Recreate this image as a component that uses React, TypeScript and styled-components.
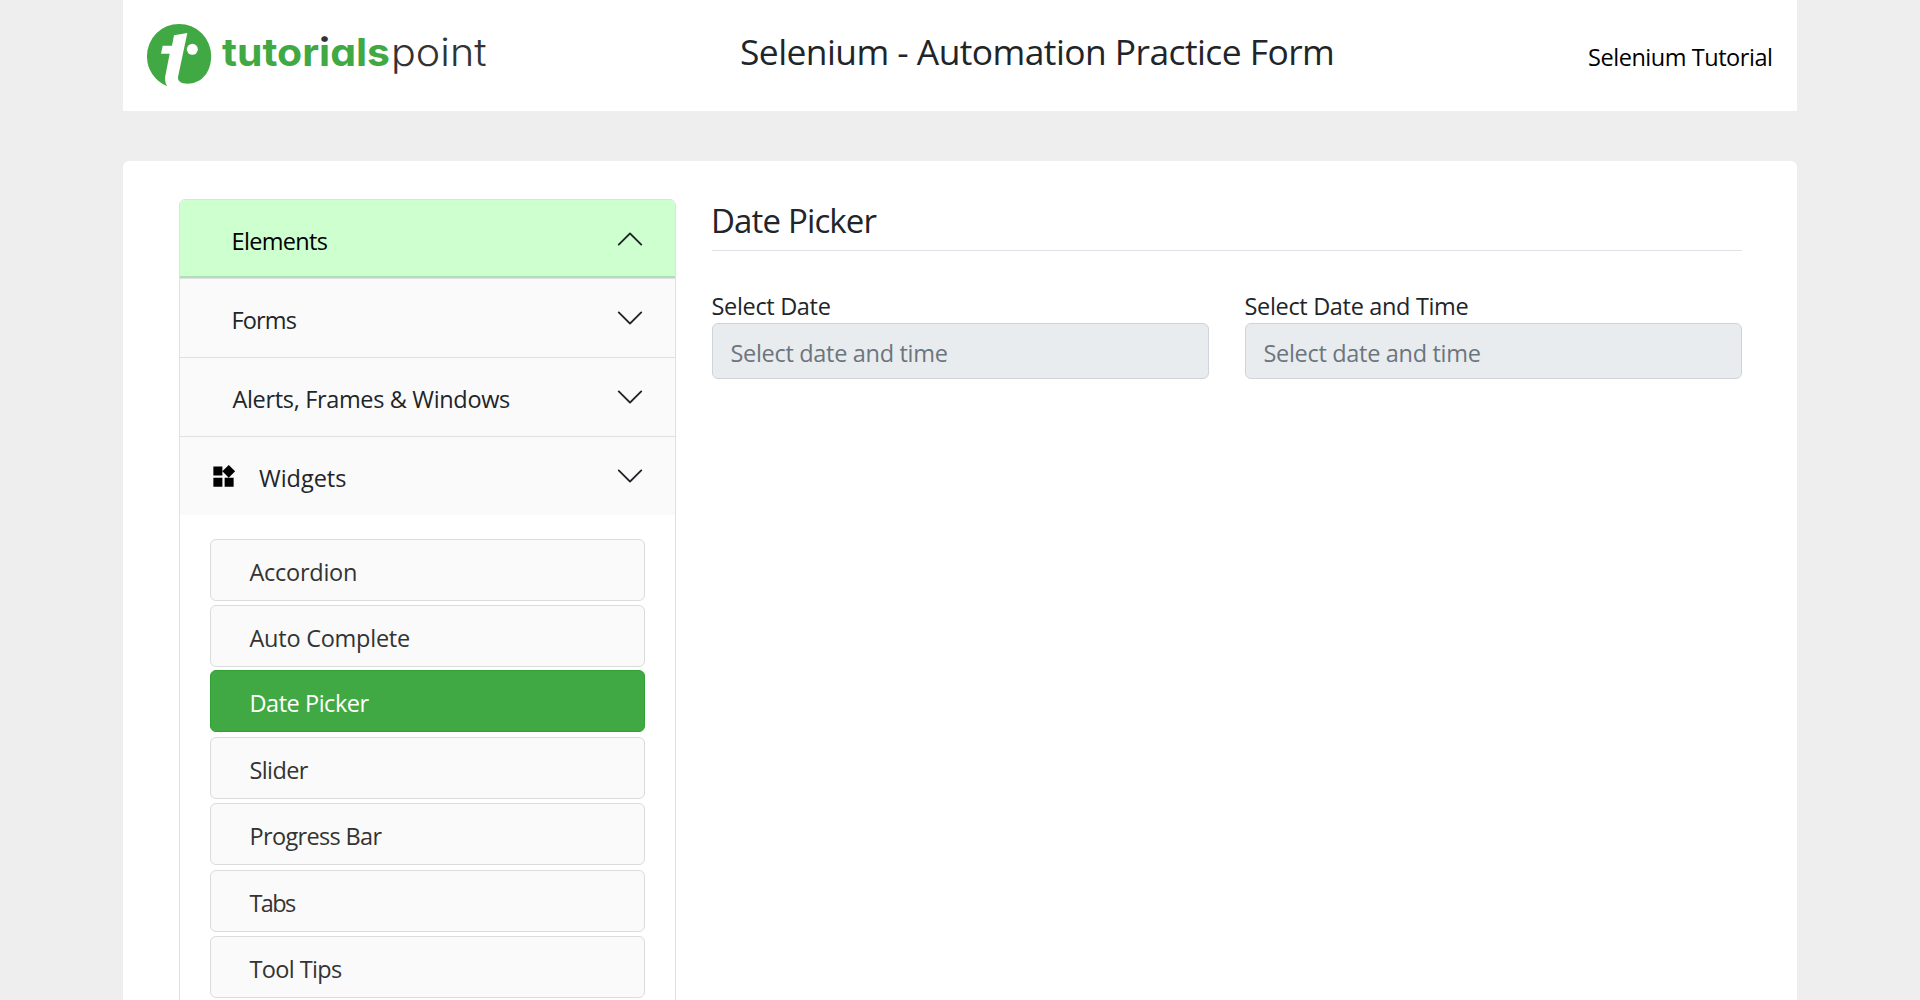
import React, { useState } from "react";
import styled, { createGlobalStyle } from "styled-components";

const GlobalStyle = createGlobalStyle`
  *, *::before, *::after { box-sizing: border-box; }
  html, body { margin: 0; padding: 0; }
  body {
    background: #eee;
    color: #212529;
    font-family: "Open Sans", "Noto Sans", sans-serif;
    font-size: 23.5px;
    line-height: 36px;
    height: 1000px;
    overflow: hidden;
  }
`;

const Page = styled.div`
  width: 1674px;
  margin: 0 auto;
  height: 1000px;
  display: flex;
  flex-direction: column;
  gap: 50px;
  overflow: hidden;
`;

const Header = styled.header`
  flex: none;
  height: 111px;
  background: #fff;
  display: flex;
  align-items: flex-start;
  padding: 20px 24.5px 0 24px;
`;

const LogoSvg = styled.svg`
  width: 346px;
  height: 70px;
  flex: none;
`;

const PageTitle = styled.h1`
  margin: 8px 0 0 247px;
  font-size: 35.4px;
  font-weight: 400;
  line-height: 46px;
  letter-spacing: -0.56px;
  white-space: nowrap;
`;

const TutorialLink = styled.a`
  margin: 19px 0 0 auto;
  color: #000;
  letter-spacing: -0.456px;
  text-decoration: none;
  white-space: nowrap;
`;

const Card = styled.main`
  flex: none;
  height: 1300px;
  background: #fff;
  border-radius: 6px;
  padding: 38px 55px 0 56px;
  display: flex;
  gap: 36px;
`;

const Sidebar = styled.aside`
  width: 497px;
  flex: none;
  border: 1px solid #dee0e2;
  border-radius: 6px;
  overflow: hidden;
`;

const SectionButton = styled.button<{ $open?: boolean; $first?: boolean }>`
  width: 100%;
  height: ${p => (p.$first ? 78 : 79)}px;
  border: 0;
  border-top: ${p => (p.$first ? "0" : "1px solid #dee0e2")};
  padding: 0 30px;
  display: flex;
  align-items: center;
  background: ${p => (p.$open ? "#cdffcf" : "#fafafa")};
  color: ${p => (p.$open ? "#000" : "#212529")};
  box-shadow: ${p => (p.$open ? "inset 0 -2px 0 #b1e0b6" : "none")};
  font: inherit;
  text-align: left;
  cursor: pointer;
`;

const Glyph = styled.svg`
  width: 27px;
  height: 27px;
  flex: none;
  margin-right: 22px;
`;

const SectionLabel = styled.span<{ $track: number; $indent: number }>`
  flex: 1;
  padding: 3px 0 0 ${p => p.$indent}px;
  letter-spacing: ${p => p.$track}px;
  white-space: nowrap;
`;

const Chevron = styled.svg<{ $up?: boolean }>`
  width: 30px;
  height: 30px;
  flex: none;
  transform: ${p => (p.$up ? "rotate(180deg)" : "none")};
`;

const SubList = styled.ul`
  list-style: none;
  margin: 0;
  padding: 24px 30px 30px;
`;

const SubItem = styled.li<{ $gap: number }>`
  margin-bottom: ${p => p.$gap}px;
`;

const SubLink = styled.a<{ $active?: boolean; $track: number; $indent: number }>`
  display: flex;
  align-items: center;
  height: 62px;
  padding: 3px 20px 0 ${p => p.$indent}px;
  border: 1px solid ${p => (p.$active ? "#2ea232" : "#dadbdc")};
  border-radius: 6px;
  background: ${p => (p.$active ? "#41a943" : "#fafafa")};
  color: ${p => (p.$active ? "#fff" : "#333")};
  letter-spacing: ${p => p.$track}px;
  text-decoration: none;
  white-space: nowrap;
`;

const Content = styled.section`
  flex: 1;
  min-width: 0;
`;

const Heading = styled.h2`
  margin: 0 0 37px;
  height: 52px;
  border-bottom: 1px solid #dee2e6;
  font-size: 33px;
  font-weight: 400;
  line-height: 43px;
  letter-spacing: -0.85px;
  text-indent: -1px;
`;

const Fields = styled.div`
  display: grid;
  grid-template-columns: 497px 497px;
  column-gap: 36px;
`;

const Field = styled.label`
  display: flex;
  flex-direction: column;
`;

const FieldLabel = styled.span`
  height: 35px;
  line-height: 36px;
  letter-spacing: -0.33px;
  text-indent: -0.5px;
`;

const DateInput = styled.input`
  width: 100%;
  height: 56px;
  padding: 3px 17.5px 0;
  border: 1px solid #ced4da;
  border-radius: 6px;
  background: #e8ecef;
  color: #6c757d;
  font: inherit;
  letter-spacing: -0.31px;
  outline: 0;
  &::placeholder { color: #6c757d; opacity: 1; }
`;

const Wordmark = styled.g`
  font-family: "Inter", "Lato", sans-serif;
  font-size: 38.5px;
  font-feature-settings: "cv11" 1;
`;

const Logo = () => (
  <LogoSvg viewBox="147 20 346 70" role="img" aria-label="tutorialspoint">
    <defs>
      <linearGradient id="stem" gradientUnits="userSpaceOnUse" x1="0" y1="30" x2="0" y2="70">
        <stop offset="0.31" stopColor="#333" />
        <stop offset="0.31" stopColor="#41a943" />
      </linearGradient>
    </defs>
    <g transform="translate(110 0) scale(0.33333)">
      <path
        fill="#41a943"
        d="M172 259A96 96 0 0 1 111 168A96 96 0 0 1 303.500 168C303.500 216 276 251 232 251C213 251 203 245 204 231L232 99L192 106L186 137H158L153 161H179L166 228C164 240 166 250 172 259Z"
      />
      <circle cx="247" cy="148" r="16.500" fill="#fff" />
    </g>
    <Wordmark>
      <text x="222" y="65.500" fontWeight="700" fill="#41a943" textLength="168" lengthAdjust="spacingAndGlyphs">
        tutor<tspan fill="url(#stem)">i</tspan>als
      </text>
      <text x="391" y="65.500" fontWeight="300" fill="#333" textLength="95.500" lengthAdjust="spacingAndGlyphs">
        point
      </text>
    </Wordmark>
  </LogoSvg>
);

const ChevronIcon = ({ up }: { up?: boolean }) => (
  <Chevron $up={up} viewBox="0 0 16 16" fill="#212529">
    <path
      fillRule="evenodd"
      d="M1.646 4.646a.5.5 0 0 1 .708 0L8 10.293l5.646-5.647a.5.5 0 0 1 .708.708l-6 6a.5.5 0 0 1-.708 0l-6-6a.5.5 0 0 1 0-.708z"
    />
  </Chevron>
);

const WidgetsIcon = () => (
  <Glyph viewBox="0 0 24 24">
    <path d="M13 13v8h8v-8h-8zM3 21h8v-8H3v8zM3 3v8h8V3H3zm13.660-1.310L11 7.340 16.660 13l5.660-5.660-5.660-5.650z" />
  </Glyph>
);

const sections = [
  { label: "Elements", track: -0.66, indent: 21.5 },
  { label: "Forms", track: -0.85, indent: 21.5 },
  { label: "Alerts, Frames & Windows", track: -0.34, indent: 22.5 },
  { label: "Widgets", track: -0.03, indent: 0 },
];

const widgets = [
  { label: "Accordion", track: -0.258, indent: 38.5, gap: 4 },
  { label: "Auto Complete", track: -0.247, indent: 38.5, gap: 3 },
  { label: "Date Picker", track: -0.465, indent: 38.5, gap: 5 },
  { label: "Slider", track: -0.6, indent: 38.5, gap: 4 },
  { label: "Progress Bar", track: -0.66, indent: 38.5, gap: 5 },
  { label: "Tabs", track: -1.6, indent: 38.5, gap: 4 },
  { label: "Tool Tips", track: -0.62, indent: 38.5, gap: 4 },
];

export default function App() {
  const [open, setOpen] = useState("Elements");
  const [active, setActive] = useState("Date Picker");

  return (
    <>
      <GlobalStyle />
      <Page>
        <Header>
          <Logo />
          <PageTitle>Selenium - Automation Practice Form</PageTitle>
          <TutorialLink>Selenium Tutorial</TutorialLink>
        </Header>
        <Card>
          <Sidebar>
            {sections.map((s, i) => (
              <SectionButton
                key={s.label}
                $first={i === 0}
                $open={open === s.label}
                onClick={() => setOpen(s.label)}
              >
                {s.label === "Widgets" && <WidgetsIcon />}
                <SectionLabel $track={s.track} $indent={s.indent}>{s.label}</SectionLabel>
                <ChevronIcon up={open === s.label} />
              </SectionButton>
            ))}
            <SubList>
              {widgets.map(w => (
                <SubItem key={w.label} $gap={w.gap}>
                  <SubLink
                    $active={active === w.label}
                    $track={w.track}
                    $indent={w.indent}
                    onClick={() => setActive(w.label)}
                  >
                    {w.label}
                  </SubLink>
                </SubItem>
              ))}
            </SubList>
          </Sidebar>
          <Content>
            <Heading>Date Picker</Heading>
            <Fields>
              <Field>
                <FieldLabel>Select Date</FieldLabel>
                <DateInput placeholder="Select date and time" readOnly />
              </Field>
              <Field>
                <FieldLabel>Select Date and Time</FieldLabel>
                <DateInput placeholder="Select date and time" readOnly />
              </Field>
            </Fields>
          </Content>
        </Card>
      </Page>
    </>
  );
}
